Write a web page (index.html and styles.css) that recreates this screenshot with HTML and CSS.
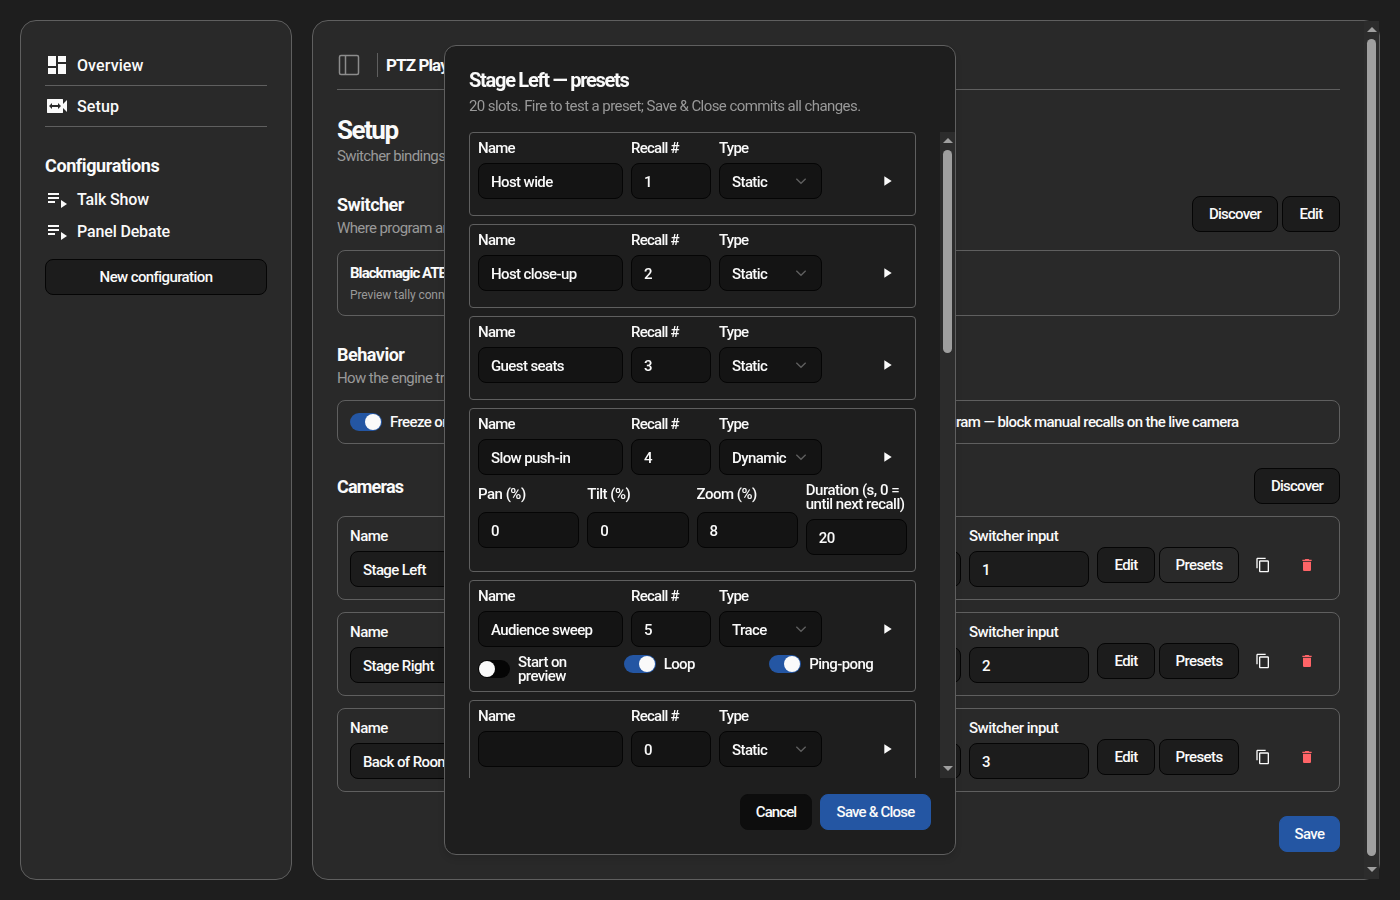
FILE: index.html
```
<!DOCTYPE html>
<html lang="en">
<head>
    <meta charset="UTF-8" />
    <meta name="viewport" content="width=device-width, initial-scale=1" />
    <title>PTZ Playout</title>
    <link rel="stylesheet" href="styles.css">
</head>
<body>
    <svg class="sprite">
        <symbol id="i-dash" viewBox="0 0 24 24"><path d="M3 13h8V3H3v10zm0 8h8v-6H3v6zm10 0h8V11h-8v10zm0-18v6h8V3h-8z"/></symbol>
        <symbol id="i-cam" viewBox="0 0 24 24"><path d="M18 10V5.500c0-.300-.200-.500-.500-.500h-15c-.300 0-.500.200-.500.500v13c0 .300.200.500.500.500h15c.300 0 .500-.200.500-.500V14l4 4V6l-4 4zM13 15v-2H7v2l-3-3 3-3v2h6V9l3 3-3 3z"/></symbol>
        <symbol id="i-list" viewBox="0 0 24 24"><path d="M3 9h11v2H3zM3 5h11v2H3zM3 13h7v2H3zM16 12v8l6-4z"/></symbol>
        <symbol id="i-play" viewBox="0 0 24 24"><path d="M8 5v14l11-7z"/></symbol>
        <symbol id="i-down" viewBox="0 0 24 24"><path d="m5 8.500 7 7 7-7" fill="none" stroke="currentColor" stroke-width="2"/></symbol>
        <symbol id="i-copy" viewBox="0 0 24 24"><path d="M16 1H4c-1.100 0-2 .9-2 2v14h2V3h12V1zm3 4H8c-1.100 0-2 .9-2 2v14c0 1.100.9 2 2 2h11c1.100 0 2-.9 2-2V7c0-1.100-.9-2-2-2zm0 16H8V7h11v14z"/></symbol>
        <symbol id="i-trash" viewBox="0 0 24 24"><path d="M6 19c0 1.100.9 2 2 2h8c1.100 0 2-.9 2-2V7H6v12zM19 4h-3.500l-1-1h-5l-1 1H5v2h14V4z"/></symbol>
    </svg>

    <div class="app">
        <aside class="panel sidebar">
            <a class="nav-item" href="#"><svg><use href="#i-dash"/></svg><span>Overview</span></a>
            <a class="nav-item" href="#"><svg><use href="#i-cam"/></svg><span>Setup</span></a>
            <h3>Configurations</h3>
            <a class="config-item" href="#"><svg><use href="#i-list"/></svg>Talk Show</a>
            <a class="config-item" href="#"><svg><use href="#i-list"/></svg>Panel Debate</a>
            <button class="btn new-config">New configuration</button>
        </aside>

        <main class="panel main">
            <div class="content">
                <header class="topbar">
                    <svg class="toggle-icon" viewBox="0 0 24 24"><rect x="2.500" y="2.500" width="19" height="19" rx="1.500"/><path d="M8.500 2.500v19"/></svg>
                    <span class="divider"></span>
                    <strong>PTZ Playout</strong>
                </header>

                <h1>Setup</h1>
                <p class="sub">Switcher bindings</p>

                <div class="section-head switcher-head">
                    <div>
                        <h2>Switcher</h2>
                        <p class="sub">Where program and</p>
                    </div>
                    <div class="actions">
                        <button class="btn w-discover">Discover</button>
                        <button class="btn w-edit">Edit</button>
                    </div>
                </div>
                <div class="card switcher-card">
                    <strong>Blackmagic ATEM</strong>
                    <small>Preview tally connected</small>
                </div>

                <div class="section-head behavior-head">
                    <div>
                        <h2>Behavior</h2>
                        <p class="sub">How the engine treats</p>
                    </div>
                </div>
                <div class="card behavior-card">
                    <label class="toggle"><span class="switch on"></span>Freeze on move</label>
                    <label class="toggle"><span class="switch on"></span>Lock on program — block manual recalls on the live camera</label>
                </div>

                <div class="section-head cameras-head">
                    <h2>Cameras</h2>
                    <button class="btn w-discover">Discover</button>
                </div>
                <div class="cameras" id="cameras"></div>

                <div class="save-row"><button class="btn primary w-save">Save</button></div>
            </div>
            <div class="scrollbar"><i class="up"></i><b></b><i class="down"></i></div>
        </main>
    </div>

    <div class="overlay">
        <div class="dialog">
            <h2>Stage Left — presets</h2>
            <p class="sub">20 slots. Fire to test a preset; Save &amp; Close commits all changes.</p>
            <div class="preset-scroll">
                <div class="presets" id="presets"></div>
                <div class="scrollbar"><i class="up"></i><b class="short"></b><i class="down"></i></div>
            </div>
            <div class="dialog-foot">
                <button class="btn cancel">Cancel</button>
                <button class="btn primary w-close">Save &amp; Close</button>
            </div>
        </div>
    </div>

    <script>
        const cameras = ["Stage Left", "Stage Right", "Back of Room"];
        const presets = [
            ["Host wide", "Static"],
            ["Host close-up", "Static"],
            ["Guest seats", "Static"],
            ["Slow push-in", "Dynamic"],
            ["Audience sweep", "Trace"],
            ["", "Static"]
        ];

        function field(label, value) {
            return `<div class="field"><label>${label}</label><div class="input"><span>${value}</span></div></div>`;
        }

        function select(label, value) {
            return `<div class="field"><label>${label}</label><div class="input"><span>${value}</span>${icon("down")}</div></div>`;
        }

        function toggle(label, on) {
            return `<label class="toggle"><span class="switch ${on ? "on" : ""}"></span><span>${label}</span></label>`;
        }

        function icon(name) {
            return `<svg><use href="#i-${name}"/></svg>`;
        }

        document.getElementById("cameras").innerHTML = cameras.map((name, i) => `
            <div class="card camera">
                ${field("Name", name)}
                ${field("", "")}
                ${field("Switcher input", i + 1)}
                <div class="actions">
                    <button class="btn w-edit">Edit</button>
                    <button class="btn w-presets ${i === 0 ? "open" : ""}">Presets</button>
                    <button class="icon-btn">${icon("copy")}</button>
                    <button class="icon-btn danger">${icon("trash")}</button>
                </div>
            </div>`).join("");

        document.getElementById("presets").innerHTML = presets.map(([name, type], i) => {
            let extra = "";
            if (type === "Dynamic") {
                extra = `<div class="moves">${field("Pan (%)", 0)}${field("Tilt (%)", 0)}${field("Zoom (%)", 8)}${field("Duration (s, 0 = until next recall)", 20)}</div>`;
            }
            if (type === "Trace") {
                extra = `<div class="flags">${toggle("Start on preview", false)}${toggle("Loop", true)}${toggle("Ping-pong", true)}</div>`;
            }
            return `
            <div class="preset">
                <div class="preset-main">
                    ${field("Name", name)}
                    ${field("Recall #", name ? i + 1 : 0)}
                    ${select("Type", type)}
                    <button class="icon-btn play">${icon("play")}</button>
                </div>
                ${extra}
            </div>`;
        }).join("");
    </script>
</body>
</html>
```
FILE: styles.css
```
* {
    box-sizing: border-box;
}
body {
    margin: 0;
    height: 100vh;
    overflow: hidden;
    background: #1e1e1e;
    color: #fafafa;
    font: 500 15px/20px Roboto, sans-serif;
    letter-spacing: -0.6px;
}
h1, h2, h3, p {
    margin: 0;
}
svg {
    fill: currentColor;
    flex: none;
}
.sprite {
    display: none;
}
.app {
    display: flex;
    gap: 20px;
    height: 100vh;
    padding: 20px;
}
.panel {
    background: #292929;
    border: 1px solid #5f5f5f;
    border-radius: 16px;
}
.sidebar {
    width: 272px;
    padding: 24px;
    display: flex;
    flex-direction: column;
}
.sidebar a {
    color: inherit;
    text-decoration: none;
    display: flex;
    align-items: center;
    gap: 8px;
    font-size: 16px;
    letter-spacing: -0.15px;
}
.sidebar svg {
    width: 24px;
    height: 24px;
}
.nav-item {
    height: 41px;
    border-bottom: 1px solid #5f5f5f;
}
.nav-item span {
    padding-top: 2px;
    letter-spacing: 0.1px;
}
.sidebar h3 {
    margin: 27px 0 6px;
    font-size: 18px;
    line-height: 24px;
    font-weight: 700;
    letter-spacing: -0.4px;
}
.config-item {
    height: 32px;
}
.btn {
    height: 36px;
    padding: 0;
    border: 1px solid #050505;
    border-radius: 8px;
    background: #1c1c1c;
    color: inherit;
    font: inherit;
    letter-spacing: inherit;
    white-space: nowrap;
}
.new-config {
    margin-top: 11px;
}
.w-discover {
    width: 86px;
    letter-spacing: -0.8px;
}
.w-edit {
    width: 58px;
}
.w-presets {
    width: 80px;
}
.w-save {
    width: 61px;
}
.w-close {
    width: 111px;
    letter-spacing: -0.8px;
}
.main {
    flex: 1;
    display: flex;
}
.content {
    flex: 1;
    padding: 24px;
}
.sub {
    color: #999;
    font-weight: 400;
}
.topbar {
    display: flex;
    align-items: center;
    height: 45px;
    padding-bottom: 5px;
    border-bottom: 1px solid #5f5f5f;
}
.topbar strong {
    font-size: 17px;
    letter-spacing: -0.9px;
}
.toggle-icon {
    width: 24px;
    height: 24px;
    fill: none;
    stroke: #8c8c8c;
    stroke-width: 1.500;
}
.divider {
    width: 1px;
    height: 24px;
    margin: 0 8px 0 16px;
    background: #5f5f5f;
}
h1 {
    margin-top: 25px;
    font-size: 26px;
    line-height: 31px;
    letter-spacing: -1.500px;
}
h2 {
    font-size: 18px;
    line-height: 24px;
    letter-spacing: -0.5px;
}
.section-head {
    display: flex;
    justify-content: space-between;
    align-items: center;
}
.section-head h2 {
    padding-top: 2px;
}
.section-head .sub {
    padding-top: 1px;
    margin-bottom: -1px;
}
.switcher-head {
    height: 48px;
    margin-top: 24px;
}
.actions {
    display: flex;
    gap: 4px;
}
.card {
    border: 1px solid #5f5f5f;
    border-radius: 8px;
    padding: 12px;
}
.switcher-card {
    display: flex;
    flex-direction: column;
    height: 66px;
    margin-top: 12px;
}
.switcher-card strong {
    letter-spacing: -0.95px;
}
.switcher-card small {
    font-size: 12px;
    font-weight: 400;
    line-height: 24px;
    letter-spacing: -0.1px;
    color: #999;
}
.behavior-head {
    height: 48px;
    margin-top: 24px;
}
.behavior-card {
    display: grid;
    grid-template-columns: 486px 1fr;
    align-items: center;
    height: 44px;
    padding: 11px 12px 13px;
    margin-top: 12px;
}
.toggle {
    display: flex;
    align-items: center;
    gap: 8px;
}
.switch {
    flex: none;
    display: flex;
    width: 32px;
    height: 18px;
    padding: 1px;
    border-radius: 9px;
    background: #050505;
}
.switch::before {
    content: "";
    width: 16px;
    height: 16px;
    border-radius: 50%;
    background: #fafafa;
}
.switch.on {
    justify-content: flex-end;
    background: #2456a3;
}
.cameras-head {
    margin-top: 24px;
}
.cameras-head h2 {
    letter-spacing: -0.8px;
}
.cameras {
    display: flex;
    flex-direction: column;
    gap: 12px;
    margin-top: 12px;
}
.camera {
    display: grid;
    grid-template-columns: 1fr 300px 120px auto;
    gap: 8px;
    align-items: end;
    height: 84px;
}
.camera .actions {
    padding-bottom: 4px;
}
.field {
    display: flex;
    flex-direction: column;
    min-width: 0;
}
.field label {
    display: flex;
    align-items: center;
    min-height: 14px;
    line-height: 14px;
    margin-bottom: 8px;
    letter-spacing: -0.5px;
}
.input {
    display: flex;
    align-items: center;
    justify-content: space-between;
    height: 36px;
    padding: 0 12px;
    border: 1px solid #050505;
    border-radius: 8px;
    background: #1c1c1c;
}
.input span {
    padding-top: 2px;
}
.input svg {
    width: 16px;
    height: 16px;
    color: #5f5f5f;
}
.icon-btn {
    display: flex;
    align-items: center;
    justify-content: center;
    width: 40px;
    height: 36px;
    padding: 0;
    border: 0;
    background: none;
    color: #fafafa;
}
.icon-btn svg {
    width: 16px;
    height: 16px;
}
.danger {
    color: #ff6467;
}
.btn.open {
    background: #292929;
}
.save-row {
    display: flex;
    justify-content: flex-end;
    margin-top: 24px;
}
.btn.primary {
    background: #2456a3;
    border-color: #2456a3;
}
.scrollbar {
    display: flex;
    flex-direction: column;
    align-items: center;
    width: 15px;
    padding: 6px 0 7px;
    background: #2c2c2c;
}
.scrollbar b {
    flex: 1;
    width: 9px;
    margin: 7px 0 11px;
    border-radius: 5px;
    background: #9f9f9f;
}
.scrollbar b.short {
    flex: none;
    height: 203px;
    margin-bottom: auto;
}
.scrollbar i {
    border: 5px solid transparent;
}
.scrollbar .up {
    border-top: 0;
    border-bottom-color: #9f9f9f;
}
.scrollbar .down {
    border-bottom: 0;
    border-top-color: #9f9f9f;
}

/* presets dialog */
.overlay {
    position: fixed;
    inset: 0;
    display: flex;
    align-items: center;
    justify-content: center;
}
.dialog {
    display: flex;
    flex-direction: column;
    width: 512px;
    height: 90vh;
    padding: 24px 0 24px 24px;
    border: 1px solid #5f5f5f;
    border-radius: 12px;
    background: #1e1e1e;
    box-shadow: 0 4px 6px rgba(0, 0, 0, 0.1);
}
.dialog h2 {
    margin-top: -2px;
    font-size: 20px;
    letter-spacing: -1.270px;
}
.dialog .sub {
    margin: 4px 0 16px;
    letter-spacing: -0.57px;
}
.preset-scroll {
    display: flex;
    justify-content: space-between;
    height: 646px;
    overflow: hidden;
}
.presets {
    width: 447px;
}
.preset {
    padding: 8px;
    margin-bottom: 8px;
    border: 1px solid #5f5f5f;
    border-radius: 4px;
}
.preset .input {
    background: #141414;
}
.preset-main {
    display: grid;
    grid-template-columns: 145px 80px 103px 1fr;
    gap: 8px;
    padding-bottom: 8px;
}
.preset-main label {
    letter-spacing: -0.75px;
}
.play {
    justify-self: end;
    margin-top: 22px;
}
.moves {
    display: grid;
    grid-template-columns: repeat(4, 1fr);
    align-items: start;
    gap: 8px;
    padding-bottom: 8px;
}
.moves label {
    min-height: 21px;
}
.moves .field:last-child label {
    margin-right: -4px;
}
.flags {
    display: grid;
    grid-template-columns: repeat(3, 1fr);
    align-items: start;
    gap: 8px;
}
.flags .toggle {
    min-height: 18px;
    line-height: 14px;
    letter-spacing: -0.6px;
}
.dialog-foot {
    display: flex;
    justify-content: flex-end;
    gap: 8px;
    margin-top: 16px;
    padding-right: 24px;
}
.btn.cancel {
    width: 72px;
    letter-spacing: -0.9px;
    background: #0d0d0d;
    border-color: #0d0d0d;
}
```
